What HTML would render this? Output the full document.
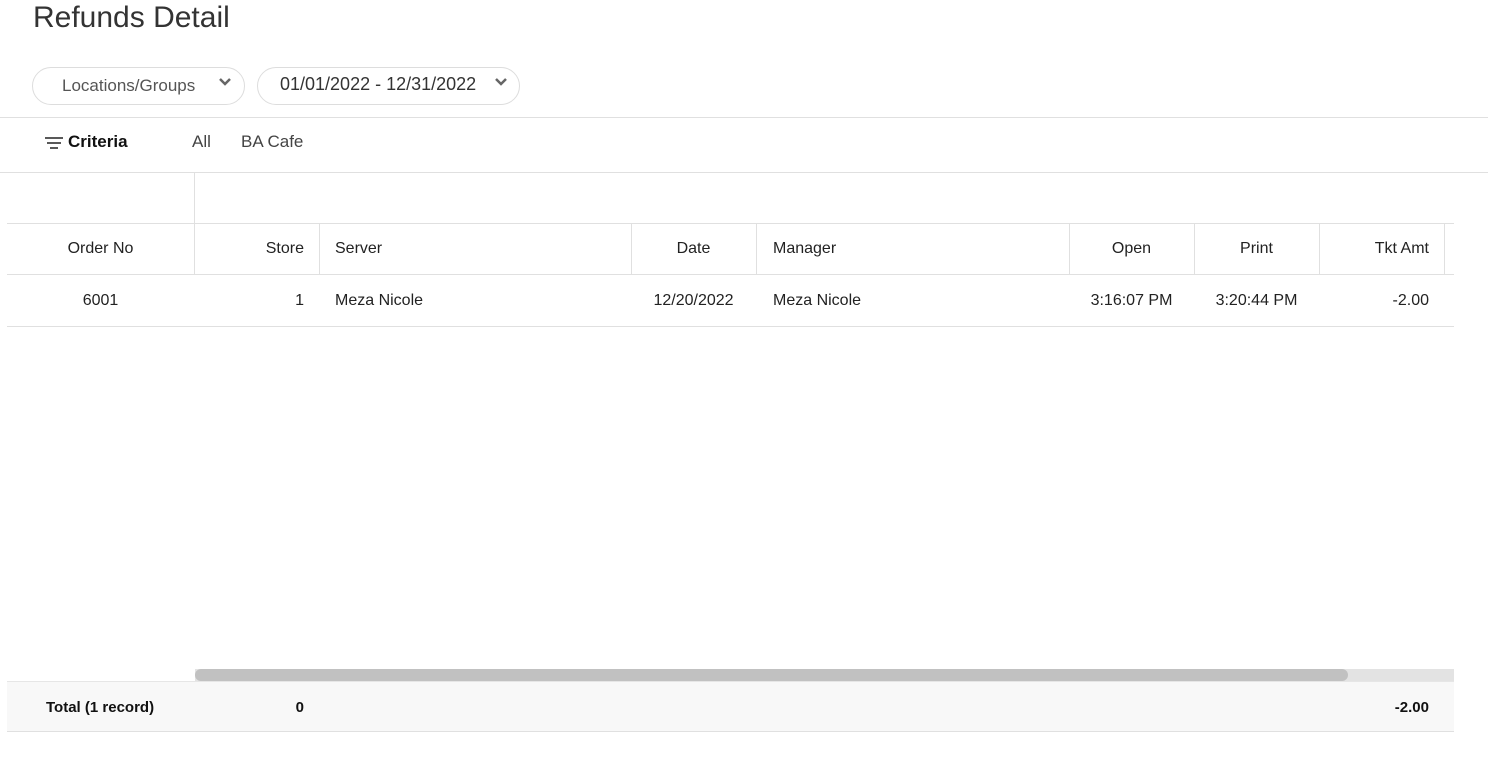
<!DOCTYPE html>
<html><head><style>
body{margin:0;width:1488px;height:757px;background:#fff;font-family:"Liberation Sans",sans-serif;color:#222;position:relative;overflow:hidden}
.a{position:absolute;white-space:nowrap}
.pill{position:absolute;border:1px solid #ddd;border-radius:20px;height:38px;top:67px;box-sizing:border-box}
.hl{position:absolute;height:1px;background:#e0e0e0}
.vl{position:absolute;width:1px;background:#e0e0e0}
.t{position:absolute;font-size:16px;line-height:20px;white-space:nowrap}
</style></head><body>
<div class="a" style="left:33px;top:1px;font-size:30px;color:#333">Refunds Detail</div>
<div class="pill" style="left:32px;width:213px"></div>
<div class="a" style="left:62px;top:76px;font-size:17px;color:#555">Locations/Groups</div>
<svg class="a" style="left:218px;top:77px" width="14" height="10"><path d="M2 2 L7 7 L12 2" stroke="#666" stroke-width="2.5" fill="none"/></svg>
<div class="pill" style="left:257px;width:263px"></div>
<div class="a" style="left:280px;top:74px;font-size:18px;color:#333">01/01/2022 - 12/31/2022</div>
<svg class="a" style="left:494px;top:77px" width="14" height="10"><path d="M2 2 L7 7 L12 2" stroke="#666" stroke-width="2.5" fill="none"/></svg>
<div class="hl" style="left:0;top:117px;width:1488px"></div>
<svg class="a" style="left:44px;top:136px" width="20" height="14"><path d="M1 2H19M3 7H17M6 12H14" stroke="#222" stroke-width="1.6"/></svg>
<div class="a" style="left:68px;top:132px;font-size:17px;font-weight:900;color:#111">Criteria</div>
<div class="a" style="left:192px;top:132px;font-size:17px;color:#444">All</div>
<div class="a" style="left:241px;top:132px;font-size:17px;color:#444">BA Cafe</div>
<div class="hl" style="left:0;top:172px;width:1488px"></div>
<div class="vl" style="left:194px;top:173px;height:101px"></div>
<div class="hl" style="left:7px;top:223px;width:1447px"></div>
<div class="hl" style="left:7px;top:274px;width:1447px"></div>
<div class="hl" style="left:7px;top:326px;width:1447px"></div>
<div class="vl" style="left:319px;top:223px;height:51px"></div>
<div class="vl" style="left:631px;top:223px;height:51px"></div>
<div class="vl" style="left:756px;top:223px;height:51px"></div>
<div class="vl" style="left:1069px;top:223px;height:51px"></div>
<div class="vl" style="left:1194px;top:223px;height:51px"></div>
<div class="vl" style="left:1319px;top:223px;height:51px"></div>
<div class="vl" style="left:1444px;top:223px;height:51px"></div>
<div class="t" style="left:7px;width:187px;text-align:center;top:239px">Order No</div>
<div class="t" style="left:194px;width:110px;text-align:right;top:239px">Store</div>
<div class="t" style="left:335px;top:239px">Server</div>
<div class="t" style="left:631px;width:125px;text-align:center;top:239px">Date</div>
<div class="t" style="left:773px;top:239px">Manager</div>
<div class="t" style="left:1069px;width:125px;text-align:center;top:239px">Open</div>
<div class="t" style="left:1194px;width:125px;text-align:center;top:239px">Print</div>
<div class="t" style="left:1319px;width:110px;text-align:right;top:239px">Tkt Amt</div>
<div class="t" style="left:7px;width:187px;text-align:center;top:291px">6001</div>
<div class="t" style="left:194px;width:110px;text-align:right;top:291px">1</div>
<div class="t" style="left:335px;top:291px">Meza Nicole</div>
<div class="t" style="left:631px;width:125px;text-align:center;top:291px">12/20/2022</div>
<div class="t" style="left:773px;top:291px">Meza Nicole</div>
<div class="t" style="left:1069px;width:125px;text-align:center;top:291px">3:16:07 PM</div>
<div class="t" style="left:1194px;width:125px;text-align:center;top:291px">3:20:44 PM</div>
<div class="t" style="left:1319px;width:110px;text-align:right;top:291px">-2.00</div>
<div class="a" style="left:195px;top:669px;width:1259px;height:12px;background:#e3e3e3"></div>
<div class="a" style="left:195px;top:669px;width:1153px;height:12px;background:#c1c1c1;border-radius:6px"></div>
<div class="a" style="left:7px;top:681px;width:1447px;height:51px;background:#f8f8f8;border-top:1px solid #e6e6e6;border-bottom:1px solid #e0e0e0;box-sizing:border-box"></div>
<div class="t" style="left:46px;top:698px;font-size:15px;font-weight:bold;color:#111">Total (1 record)</div>
<div class="t" style="left:194px;width:110px;text-align:right;top:698px;font-size:15px;font-weight:bold;color:#111">0</div>
<div class="t" style="left:1319px;width:110px;text-align:right;top:698px;font-size:15px;font-weight:bold;color:#111">-2.00</div>
</body></html>
